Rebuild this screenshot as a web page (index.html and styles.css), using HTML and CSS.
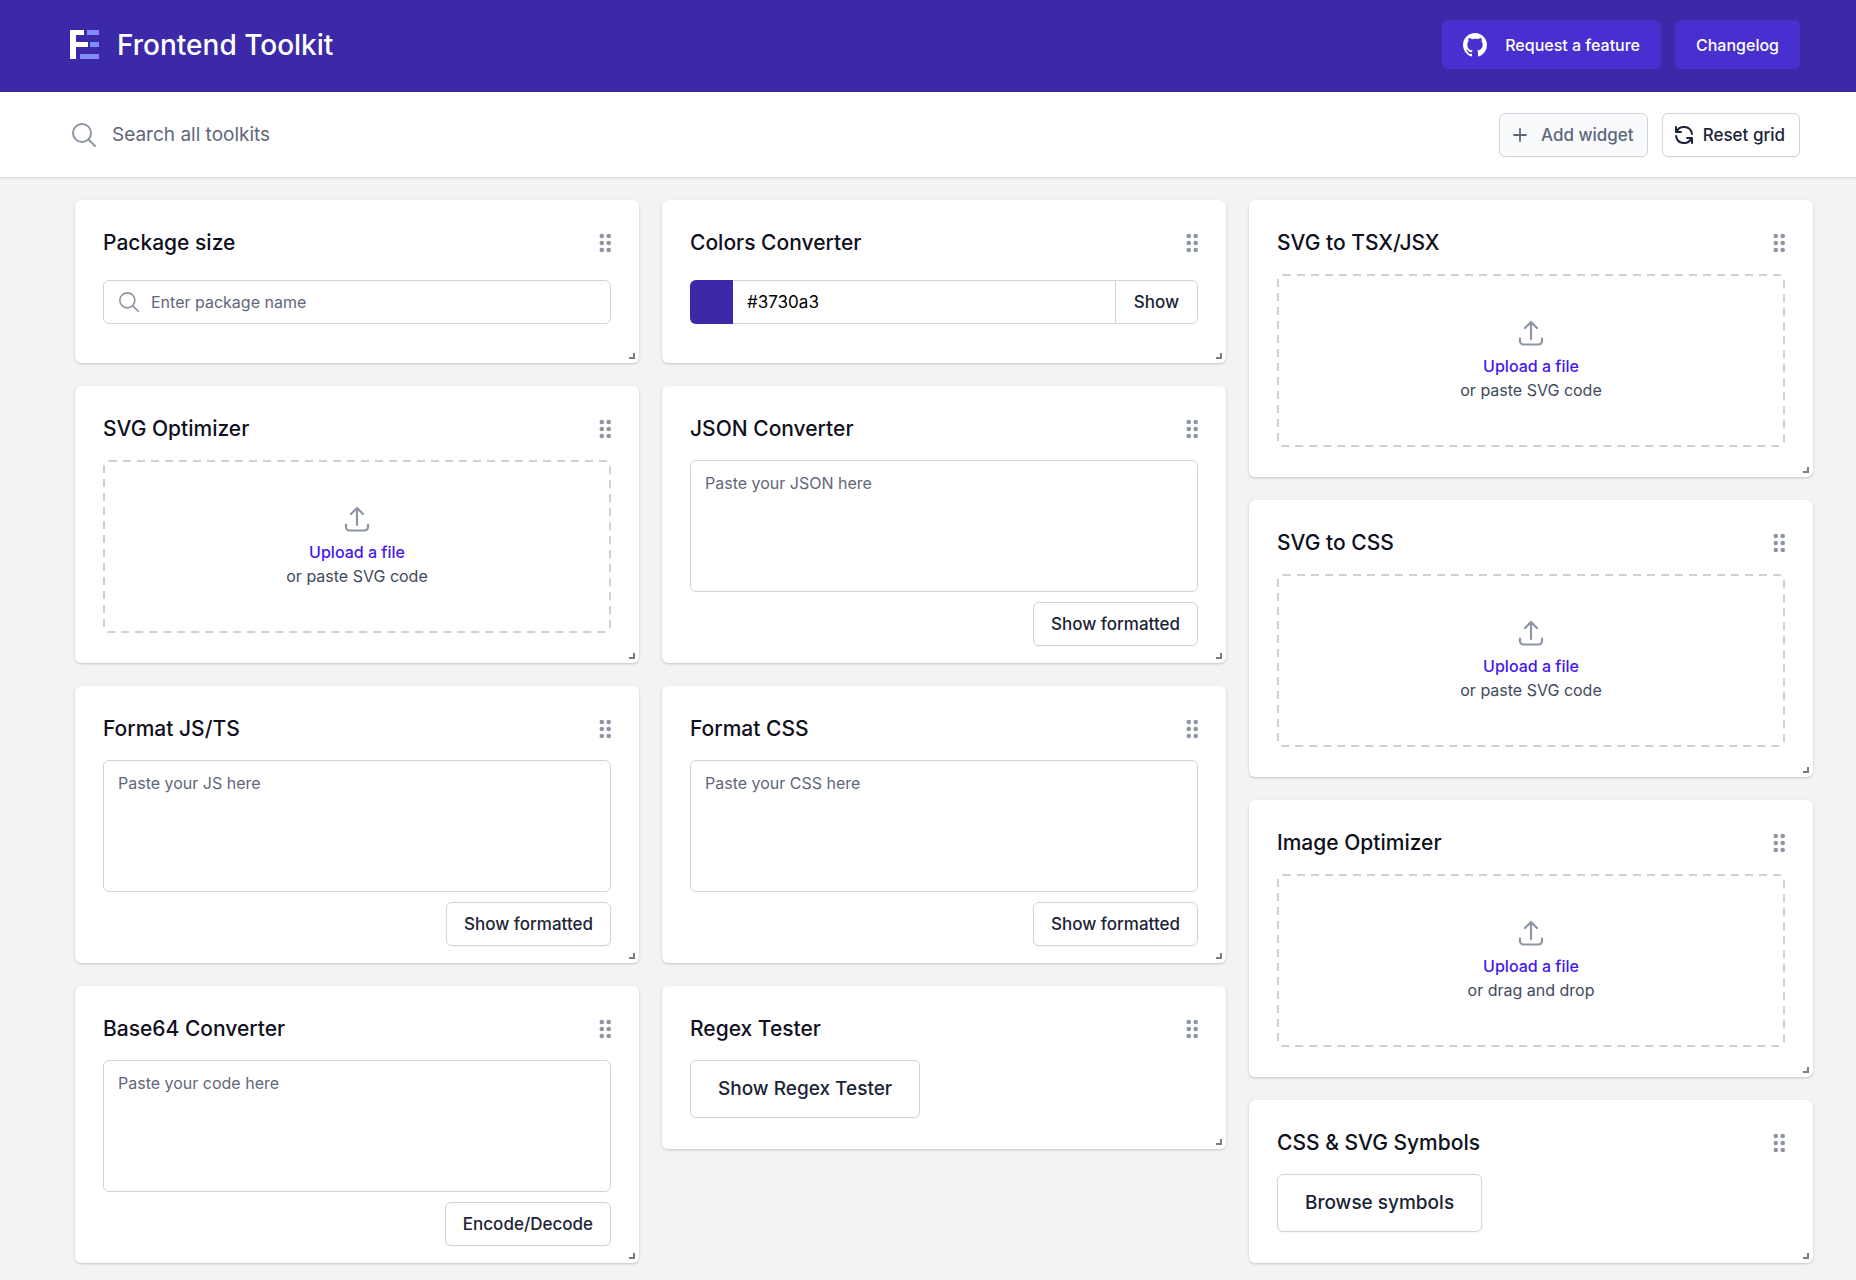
FILE: index.html
```html
<!DOCTYPE html>
<html lang="en">
<head>
<meta charset="utf-8">
<meta name="viewport" content="width=device-width, initial-scale=1">
<title>Frontend Toolkit</title>
<link rel="stylesheet" href="styles.css">
</head>
<body>
<svg class="sprite" aria-hidden="true">
  <symbol id="grip" viewBox="0 0 12 20">
    <g fill="currentColor"><circle cx="2.800" cy="3" r="2.300"/><circle cx="9.700" cy="3" r="2.300"/><circle cx="2.800" cy="10" r="2.300"/><circle cx="9.700" cy="10" r="2.300"/><circle cx="2.800" cy="17" r="2.300"/><circle cx="9.700" cy="17" r="2.300"/></g>
  </symbol>
  <symbol id="search" viewBox="0 0 24 24">
    <g fill="none" stroke="currentColor" stroke-linecap="round"><circle cx="10" cy="10" r="9"/><path d="M16.500 16.500 23 23"/></g>
  </symbol>
  <symbol id="upload" viewBox="0 0 26 26">
    <path d="M13 19V2M7 8l6-6 6 6M2 18.500V21a3.500 3.500 0 0 0 3.500 3.500h15A3.500 3.500 0 0 0 24 21v-2.500" fill="none" stroke="currentColor" stroke-width="2.200" stroke-linecap="round" stroke-linejoin="round"/>
  </symbol>
  <symbol id="corner" viewBox="0 0 6 6"><path d="M5 0v5H0" fill="none" stroke="currentColor" stroke-width="2"/></symbol>
</svg>

<header class="header">
  <div class="brand">
    <svg class="logo" viewBox="0 0 29 29" aria-hidden="true">
      <path d="M0 0h14v5H6v7h12v5H6v12H0z" fill="#fff"/>
      <path d="M17 0h12v5H17zM20 12h9v5h-9zM10 24h19v5H10z" fill="#818cf8"/>
    </svg>
    <h1 class="brand-name">Frontend Toolkit</h1>
  </div>
  <nav class="header-nav">
    <a class="nav-link" href="#feature">
      <svg class="github" viewBox="2 2 20 20" aria-hidden="true"><path fill="currentColor" d="M12 2C6.477 2 2 6.484 2 12.017c0 4.425 2.865 8.18 6.839 9.504.5.092.682-.217.682-.483 0-.237-.008-.868-.013-1.703-2.782.605-3.369-1.343-3.369-1.343-.454-1.158-1.11-1.466-1.11-1.466-.908-.62.069-.608.069-.608 1.003.07 1.531 1.032 1.531 1.032.892 1.53 2.341 1.088 2.91.832.092-.647.35-1.088.636-1.338-2.22-.253-4.555-1.113-4.555-4.951 0-1.093.39-1.988 1.029-2.688-.103-.253-.446-1.272.098-2.65 0 0 .84-.27 2.75 1.026A9.564 9.564 0 0112 6.844c.85.004 1.705.115 2.504.337 1.909-1.296 2.747-1.027 2.747-1.027.546 1.379.202 2.398.1 2.651.64.7 1.028 1.595 1.028 2.688 0 3.848-2.339 4.695-4.566 4.943.359.309.678.92.678 1.855 0 1.338-.012 2.419-.012 2.747 0 .268.18.58.688.482A10.019 10.019 0 0022 12.017C22 6.484 17.522 2 12 2z"/></svg>
      Request a feature
    </a>
    <a class="nav-link" href="#changelog">Changelog</a>
  </nav>
</header>

<div class="toolbar">
  <label class="search">
    <svg class="search-icon" aria-hidden="true"><use href="#search"/></svg>
    <input class="search-input" type="search" placeholder="Search all toolkits" aria-label="Search all toolkits">
  </label>
  <div class="toolbar-actions">
    <button class="button button-muted" type="button">
      <svg class="plus" viewBox="0 0 14 14" aria-hidden="true"><path d="M7 1v12M1 7h12" fill="none" stroke="currentColor" stroke-width="1.800" stroke-linecap="round"/></svg>
      Add widget
    </button>
    <button class="button button-reset" type="button">
      <svg class="reset" viewBox="3 3 18 18" aria-hidden="true"><path d="M4 4v5h.582m15.356 2A8.001 8.001 0 0 0 4.582 9m0 0H9m11 11v-5h-.581m0 0a8.003 8.003 0 0 1-15.357-2m15.357 2H15" fill="none" stroke="currentColor" stroke-width="2" stroke-linecap="round" stroke-linejoin="round"/></svg>
      Reset grid
    </button>
  </div>
</div>

<main class="board">
  <div class="column">
    <section class="card card-short">
      <div class="card-head"><h2 class="card-title">Package size</h2><svg class="grip" aria-hidden="true"><use href="#grip"/></svg></div>
      <label class="field field-row">
        <svg class="field-icon" aria-hidden="true"><use href="#search"/></svg>
        <input class="field-input" type="text" placeholder="Enter package name" aria-label="Package name">
      </label>
      <svg class="corner" aria-hidden="true"><use href="#corner"/></svg>
    </section>
    <section class="card">
      <div class="card-head"><h2 class="card-title">SVG Optimizer</h2><svg class="grip" aria-hidden="true"><use href="#grip"/></svg></div>
      <div class="drop">
        <svg class="drop-outline" aria-hidden="true"><rect class="dashes" x="1" y="1" rx="5"/></svg>
        <svg class="upload" aria-hidden="true"><use href="#upload"/></svg>
        <button class="drop-link" type="button">Upload a file</button>
        <p class="drop-hint">or paste SVG code</p>
      </div>
      <svg class="corner" aria-hidden="true"><use href="#corner"/></svg>
    </section>
    <section class="card">
      <div class="card-head"><h2 class="card-title">Format JS/TS</h2><svg class="grip" aria-hidden="true"><use href="#grip"/></svg></div>
      <textarea class="code" placeholder="Paste your JS here" aria-label="JS or TS code"></textarea>
      <button class="button button-end" type="button">Show formatted</button>
      <svg class="corner" aria-hidden="true"><use href="#corner"/></svg>
    </section>
    <section class="card">
      <div class="card-head"><h2 class="card-title">Base64 Converter</h2><svg class="grip" aria-hidden="true"><use href="#grip"/></svg></div>
      <textarea class="code" placeholder="Paste your code here" aria-label="Code to encode or decode"></textarea>
      <button class="button button-end" type="button">Encode/Decode</button>
      <svg class="corner" aria-hidden="true"><use href="#corner"/></svg>
    </section>
  </div>

  <div class="column">
    <section class="card card-short">
      <div class="card-head"><h2 class="card-title">Colors Converter</h2><svg class="grip" aria-hidden="true"><use href="#grip"/></svg></div>
      <div class="field-row color-row">
        <span class="swatch"></span>
        <input class="color-input" type="text" value="#3730a3" aria-label="Color">
        <button class="color-show" type="button">Show</button>
      </div>
      <svg class="corner" aria-hidden="true"><use href="#corner"/></svg>
    </section>
    <section class="card">
      <div class="card-head"><h2 class="card-title">JSON Converter</h2><svg class="grip" aria-hidden="true"><use href="#grip"/></svg></div>
      <textarea class="code" placeholder="Paste your JSON here" aria-label="JSON"></textarea>
      <button class="button button-end" type="button">Show formatted</button>
      <svg class="corner" aria-hidden="true"><use href="#corner"/></svg>
    </section>
    <section class="card">
      <div class="card-head"><h2 class="card-title">Format CSS</h2><svg class="grip" aria-hidden="true"><use href="#grip"/></svg></div>
      <textarea class="code" placeholder="Paste your CSS here" aria-label="CSS code"></textarea>
      <button class="button button-end" type="button">Show formatted</button>
      <svg class="corner" aria-hidden="true"><use href="#corner"/></svg>
    </section>
    <section class="card card-short">
      <div class="card-head"><h2 class="card-title">Regex Tester</h2><svg class="grip" aria-hidden="true"><use href="#grip"/></svg></div>
      <button class="button button-large" type="button">Show Regex Tester</button>
      <svg class="corner" aria-hidden="true"><use href="#corner"/></svg>
    </section>
  </div>

  <div class="column">
    <section class="card">
      <div class="card-head"><h2 class="card-title">SVG to TSX/JSX</h2><svg class="grip" aria-hidden="true"><use href="#grip"/></svg></div>
      <div class="drop">
        <svg class="drop-outline" aria-hidden="true"><rect class="dashes" x="1" y="1" rx="5"/></svg>
        <svg class="upload" aria-hidden="true"><use href="#upload"/></svg>
        <button class="drop-link" type="button">Upload a file</button>
        <p class="drop-hint">or paste SVG code</p>
      </div>
      <svg class="corner" aria-hidden="true"><use href="#corner"/></svg>
    </section>
    <section class="card">
      <div class="card-head"><h2 class="card-title">SVG to CSS</h2><svg class="grip" aria-hidden="true"><use href="#grip"/></svg></div>
      <div class="drop">
        <svg class="drop-outline" aria-hidden="true"><rect class="dashes" x="1" y="1" rx="5"/></svg>
        <svg class="upload" aria-hidden="true"><use href="#upload"/></svg>
        <button class="drop-link" type="button">Upload a file</button>
        <p class="drop-hint">or paste SVG code</p>
      </div>
      <svg class="corner" aria-hidden="true"><use href="#corner"/></svg>
    </section>
    <section class="card">
      <div class="card-head"><h2 class="card-title">Image Optimizer</h2><svg class="grip" aria-hidden="true"><use href="#grip"/></svg></div>
      <div class="drop">
        <svg class="drop-outline" aria-hidden="true"><rect class="dashes" x="1" y="1" rx="5"/></svg>
        <svg class="upload" aria-hidden="true"><use href="#upload"/></svg>
        <button class="drop-link" type="button">Upload a file</button>
        <p class="drop-hint">or drag and drop</p>
      </div>
      <svg class="corner" aria-hidden="true"><use href="#corner"/></svg>
    </section>
    <section class="card card-short">
      <div class="card-head"><h2 class="card-title">CSS &amp; SVG Symbols</h2><svg class="grip" aria-hidden="true"><use href="#grip"/></svg></div>
      <button class="button button-large" type="button">Browse symbols</button>
      <svg class="corner" aria-hidden="true"><use href="#corner"/></svg>
    </section>
  </div>
</main>
</body>
</html>
```
FILE: styles.css
```css
*, *::before, *::after { box-sizing: border-box; }

body {
  margin: 0;
  background: #f2f3f5;
  color: #0f1020;
  font-family: Inter, "Liberation Sans", sans-serif;
  font-size: 16px;
  line-height: 24px;
}

h1, h2, p { margin: 0; }
button, input, textarea { font: inherit; color: inherit; margin: 0; }
button { cursor: pointer; }
svg { display: block; flex: none; }
::placeholder { color: #5f677b; opacity: 1; }
.sprite { position: absolute; width: 0; height: 0; }

/* Header */
.header {
  display: flex;
  align-items: center;
  justify-content: space-between;
  min-height: 92px;
  padding: 20px 56px 23px 70px;
  background: #3c29a8;
  color: #fff;
}
.brand { display: flex; align-items: center; gap: 18px; }
.logo { width: 29px; height: 29px; }
.brand-name { font-size: 28px; line-height: 36px; font-weight: 500; }
.header-nav { display: flex; gap: 14px; }
.nav-link {
  display: flex;
  align-items: center;
  gap: 18px;
  height: 49px;
  padding: 0 21px;
  border-radius: 6px;
  background: #482fd0;
  color: #fff;
  font-weight: 500;
  text-decoration: none;
}
.github { width: 24px; height: 24px; }

/* Toolbar */
.toolbar {
  display: flex;
  align-items: center;
  justify-content: space-between;
  padding: 21px 56px 20px 72px;
  background: #fff;
  border-bottom: 1px solid #d9dbdf;
  box-shadow: 0 1px 2px rgba(0, 0, 0, .06);
}
.search { display: flex; flex: 1; align-items: center; gap: 16px; }
.search-icon { width: 24px; height: 24px; color: #8e95a6; stroke-width: 2px; }
.search-input {
  flex: 1;
  min-width: 0;
  padding: 0;
  border: 0;
  outline: 0;
  background: none;
  font-size: 19px;
}
.toolbar-actions { display: flex; gap: 14px; }

.button {
  display: flex;
  align-items: center;
  justify-content: center;
  height: 44px;
  padding: 0 17px;
  border: 1px solid #d2d4da;
  border-radius: 6px;
  background: #fff;
  color: #1b2436;
  font-size: 17px;
  font-weight: 500;
  box-shadow: 0 1px 2px rgba(0, 0, 0, .04);
}
.button-muted { gap: 14px; padding: 0 13px; background: #f9fafb; color: #5f677b; }
.button-reset { gap: 10px; padding: 0 14px 0 12px; }
.plus { width: 14px; height: 14px; }
.reset { width: 18px; height: 18px; }
.button-end { align-self: flex-end; margin-top: 10px; }
.button-large { align-self: flex-start; height: 58px; padding: 0 27px; font-size: 19px; }

/* Widget board */
.board {
  display: grid;
  grid-template-columns: repeat(3, minmax(0, 1fr));
  align-items: start;
  gap: 23px;
  padding: 22px 43px 16px 75px;
}
.column { display: flex; flex-direction: column; gap: 23px; }
.card {
  position: relative;
  display: flex;
  flex-direction: column;
  min-height: 277px;
  padding: 29px 28px 16px;
  border-radius: 6px;
  background: #fff;
  box-shadow: 0 1px 3px rgba(0, 0, 0, .12), 0 1px 2px rgba(0, 0, 0, .08);
}
.card-short { min-height: 163px; }
.card-head {
  display: flex;
  align-items: center;
  justify-content: space-between;
  margin-bottom: 17px;
}
.card-title { font-size: 21px; line-height: 28px; font-weight: 500; }
.grip { width: 12px; height: 20px; color: #8e95a6; }
.corner { position: absolute; right: 4px; bottom: 4px; width: 6px; height: 6px; color: #7c7c84; }

.field-row {
  display: flex;
  align-items: center;
  height: 44px;
  margin-top: 6px;
  border: 1px solid #d2d4da;
  border-radius: 6px;
}
.field { gap: 12px; padding: 0 15px; }
.field-icon { width: 20px; height: 20px; color: #8e95a6; stroke-width: 2px; }
.field-input, .color-input {
  flex: 1;
  min-width: 0;
  padding: 0;
  border: 0;
  outline: 0;
  background: none;
}
.color-row { align-items: stretch; }
.swatch {
  width: 43px;
  margin: -1px 0 -1px -1px;
  border-radius: 6px 0 0 6px;
  background: #3c29a8;
}
.color-input { padding: 0 14px; color: #000; font-size: 17px; }
.color-show {
  width: 82px;
  padding: 0;
  border: 0;
  border-left: 1px solid #d2d4da;
  background: none;
  color: #1b2436;
  font-size: 17px;
  font-weight: 500;
}

.code {
  display: block;
  width: 100%;
  height: 132px;
  padding: 10px 14px;
  border: 1px solid #d2d4da;
  border-radius: 6px;
  outline: 0;
  background: #fff;
  resize: none;
}

.drop {
  position: relative;
  display: flex;
  flex-direction: column;
  align-items: center;
  justify-content: center;
  height: 173px;
}
/* Outline drawn as a stroke, which lets the dashes be longer than a CSS border's */
.drop-outline {
  position: absolute;
  inset: 0;
  width: 100%;
  height: 100%;
  pointer-events: none;
}
.dashes {
  width: calc(100% - 2px);
  height: calc(100% - 2px);
  fill: none;
  stroke: #cdd0d8;
  stroke-width: 2px;
  stroke-dasharray: 8 6;
}
.upload { width: 26px; height: 26px; margin-bottom: 8px; color: #8e95a6; }
.drop-link {
  padding: 0;
  border: 0;
  background: none;
  color: #4417f0;
  font-weight: 500;
}
.drop-hint { color: #404a5c; }
```
